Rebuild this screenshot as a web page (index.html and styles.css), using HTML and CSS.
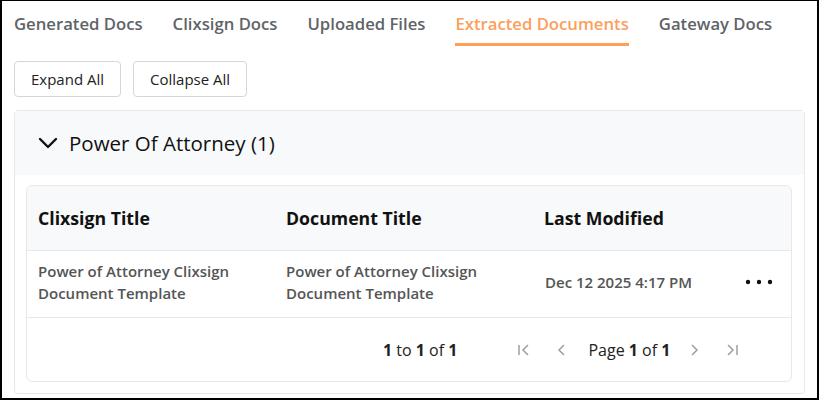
FILE: index.html
```html
<!DOCTYPE html>
<html lang="en">
<head>
  <meta charset="UTF-8">
  <meta name="viewport" content="width=device-width, initial-scale=1.0">
  <title>Extracted Documents</title>
  <link rel="stylesheet" href="styles.css">
</head>
<body>
  <div class="frame">
    <!-- Document tabs -->
    <nav class="tabs">
      <a class="tab" href="#">Generated Docs</a>
      <a class="tab" href="#">Clixsign Docs</a>
      <a class="tab" href="#">Uploaded Files</a>
      <a class="tab active" href="#">Extracted Documents</a>
      <a class="tab" href="#">Gateway Docs</a>
    </nav>

    <div class="toolbar">
      <button class="btn">Expand All</button>
      <button class="btn">Collapse All</button>
    </div>

    <!-- Group: Power Of Attorney -->
    <section class="group">
      <header class="group-head">
        <svg class="chevron" width="20" height="12" viewBox="0 0 20 12">
          <path d="M2 2 L10 10 L18 2" fill="none" stroke="#111" stroke-width="2.4" stroke-linecap="round" stroke-linejoin="round"/>
        </svg>
        <h2>Power Of Attorney (1)</h2>
      </header>
      <div class="group-body">
        <div class="grid">
          <div class="row grid-head">
            <div class="cell">Clixsign Title</div>
            <div class="cell">Document Title</div>
            <div class="cell">Last Modified</div>
            <div class="cell"></div>
          </div>
          <div class="row">
            <div class="cell">Power of Attorney Clixsign Document Template</div>
            <div class="cell">Power of Attorney Clixsign Document Template</div>
            <div class="cell date">Dec 12 2025 4:17 PM</div>
            <div class="cell actions">
              <svg width="28" height="6" viewBox="0 0 28 6">
                <circle cx="3" cy="3" r="2.2" fill="#111"/>
                <circle cx="14" cy="3" r="2.2" fill="#111"/>
                <circle cx="25" cy="3" r="2.2" fill="#111"/>
              </svg>
            </div>
          </div>
          <div class="pager">
            <span class="summary"><b>1</b> to <b>1</b> of <b>1</b></span>
            <span class="pager-nav">
              <svg class="pg" width="14" height="14" viewBox="0 0 14 14">
                <path d="M2 2 V12 M11 2 L6 7 L11 12" fill="none" stroke="#9aa0a6" stroke-width="1.5"/>
              </svg>
              <svg class="pg" width="14" height="14" viewBox="0 0 14 14">
                <path d="M9 2 L4 7 L9 12" fill="none" stroke="#9aa0a6" stroke-width="1.5"/>
              </svg>
              <span class="page">Page <b>1</b> of <b>1</b></span>
              <svg class="pg" width="14" height="14" viewBox="0 0 14 14">
                <path d="M5 2 L10 7 L5 12" fill="none" stroke="#9aa0a6" stroke-width="1.5"/>
              </svg>
              <svg class="pg" width="14" height="14" viewBox="0 0 14 14">
                <path d="M3 2 L8 7 L3 12 M12 2 V12" fill="none" stroke="#9aa0a6" stroke-width="1.5"/>
              </svg>
            </span>
          </div>
        </div>
      </div>
    </section>
  </div>
</body>
</html>
```

FILE: styles.css
```css
html, body {
  margin: 0;
  padding: 0;
  background-color: #ffffff;
}
body {
  font-family: "Open Sans", "Noto Sans", sans-serif;
  color: #222;
}
.frame {
  box-sizing: border-box;
  width: 819px;
  height: 400px;
  border: 2px solid #000;
  border-top-width: 1px;
  padding: 0 12px;
  overflow: hidden;
}

/* Tabs */
.tabs {
  display: flex;
  gap: 30px;
}
.tab {
  font-size: 16.7px;
  font-weight: 600;
  line-height: 22px;
  color: #5f6369;
  text-decoration: none;
  padding: 12px 0 8px;
  border-bottom: 3px solid transparent;
}
.tab.active {
  color: #fb9f5b;
  border-bottom-color: #fb9f5b;
}

/* Buttons */
.toolbar {
  display: flex;
  gap: 12px;
  margin-top: 15px;
}
.btn {
  font-family: "Open Sans", sans-serif;
  font-size: 15px;
  color: #222;
  background-color: #fff;
  border: 1px solid #d4d6da;
  border-radius: 4px;
  height: 36px;
  padding: 0 16px;
  cursor: pointer;
}

/* Group */
.group {
  margin-top: 13px;
  border: 1px solid #e6e8ec;
  border-radius: 4px;
}
.group-head {
  display: flex;
  align-items: center;
  gap: 11px;
  height: 64px;
  padding-left: 23px;
  background-color: #f8f9fb;
}
.group-head h2 {
  margin: 0;
  font-size: 20.5px;
  font-weight: 500;
  color: #111;
}
.group-body {
  padding: 10px 12px 11px 11px;
}

/* Table */
.grid {
  border: 1px solid #e6e8ec;
  border-radius: 6px;
  overflow: hidden;
}
.row {
  display: grid;
  grid-template-columns: 248px 258px 200px 1fr;
  align-items: center;
  border-bottom: 1px solid #e6e8ec;
}
.grid-head {
  height: 64px;
  background-color: #f8f9fb;
}
.grid-head .cell {
  font-size: 17.7px;
  font-weight: 700;
  color: #111;
}
.row:not(.grid-head) {
  height: 67px;
  padding-bottom: 4px;
  box-sizing: border-box;
}
.cell {
  padding: 0 11px;
  font-size: 15px;
  font-weight: 600;
  line-height: 22px;
  color: #555;
}
.date {
  padding-left: 12px;
}
.actions {
  display: flex;
  justify-content: center;
  padding: 0 7px 0 0;
}

/* Pager */
.pager {
  display: flex;
  align-items: center;
  height: 63px;
  padding-left: 356px;
  font-size: 16px;
  color: #222;
}
.pager b {
  font-weight: 700;
}
.pager-nav {
  display: flex;
  align-items: center;
  margin-left: 60px;
}
.pg {
  margin-right: 24px;
}
.page {
  margin-right: 17px;
  margin-left: -5px;
}
```
